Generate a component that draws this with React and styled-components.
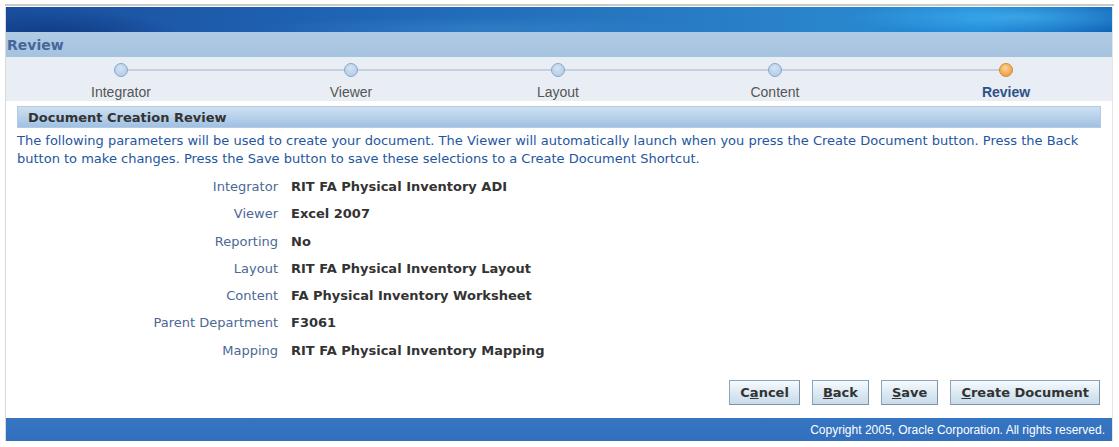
import React from 'react'
import styled, { createGlobalStyle } from 'styled-components'

const Global = createGlobalStyle`
  body {
    margin: 0;
    background: #fff;
    font-family: "DejaVu Sans", Tahoma, sans-serif;
  }
`

const Page = styled.div`
  padding: 4px 6px 6px 5px;
`

const TopRule = styled.div`
  height: 2px;
  background: #c9c9c9;
  margin-right: -1px;
  margin-bottom: 1px;
`

const Frame = styled.div`
  border-left: 1px solid #d9d9d9;
  border-right: 1px solid #e4e4e4;
`

const Banner = styled.div`
  height: 25px;
  background:
    radial-gradient(ellipse 240px 26px at 1010px 10px, rgba(80, 190, 245, 0.6), transparent 70%),
    radial-gradient(ellipse 180px 40px at 50px 30px, rgba(10, 45, 115, 0.65), transparent 70%),
    radial-gradient(ellipse 320px 18px at 470px 22px, rgba(70, 150, 215, 0.35), transparent 70%),
    linear-gradient(90deg, #1a4f9e 0%, #1f62b2 28%, #2676c0 55%, #2a86cc 75%, #1d88d8 88%, #0f62b6 100%);
`

const TitleBar = styled.div`
  height: 25px;
  display: flex;
  align-items: center;
  padding-left: 1px;
  background: linear-gradient(#b0cbe4, #a5c2df);
  color: #46669a;
  font-weight: bold;
  font-size: 14px;
`

const Train = styled.div`
  height: 44px;
  background: #e9eef5;
  display: grid;
  grid-template-columns: 230px 230px 184px 250px 1fr;
`

const Step = styled.div`
  position: relative;
  display: flex;
  flex-direction: column;
  align-items: center;
  padding-top: 6px;
  &::before, &::after {
    content: '';
    position: absolute;
    top: 12px;
    height: 2px;
    background: #c2d2e3;
    width: 50%;
  }
  &::before {
    left: 0;
    display: ${p => (p.$first ? 'none' : 'block')};
  }
  &::after {
    right: 0;
    display: ${p => (p.$last ? 'none' : 'block')};
  }
`

const Node = styled.span`
  position: relative;
  z-index: 1;
  width: 12px;
  height: 12px;
  border-radius: 50%;
  border: 1px solid ${p => (p.$active ? '#d0893a' : '#86a7c8')};
  background: ${p =>
    p.$active
      ? 'radial-gradient(circle at 45% 35%, #fbd39a, #f0a246 70%)'
      : 'radial-gradient(circle at 45% 35%, #d3e3f3, #b7cfe8 70%)'};
`

const StepLabel = styled.span`
  margin-top: 7px;
  font-family: "Liberation Sans", Arial, sans-serif;
  font-size: 14px;
  color: ${p => (p.$active ? '#2d5188' : '#555')};
  font-weight: ${p => (p.$active ? 'bold' : 'normal')};
`

const Content = styled.div`
  padding: 5px 11px 0 11px;
`

const SectionHeader = styled.div`
  height: 20px;
  display: flex;
  align-items: center;
  padding-left: 10px;
  border: 1px solid #b4cbe2;
  background: linear-gradient(#cfe0f1, #9fc1e3);
  color: #333;
  font-weight: bold;
  font-size: 13px;
`

const Intro = styled.p`
  margin: 4px 0 0 0;
  color: #2456a0;
  font-size: 13px;
  line-height: 18px;
`

const Fields = styled.div`
  display: grid;
  grid-template-columns: 261px 1fr;
  column-gap: 13px;
  margin-top: 5px;
  line-height: 27.3px;
`

const FieldLabel = styled.div`
  text-align: right;
  color: #4c6894;
  font-size: 13px;
`

const FieldValue = styled.div`
  color: #333;
  font-weight: bold;
  font-size: 13px;
`

const Buttons = styled.div`
  display: flex;
  justify-content: flex-end;
  gap: 12px;
  margin-top: 16px;
  padding-right: 1px;
`

const Button = styled.button`
  height: 25px;
  padding: 0 10px;
  border: 1px solid #8ea5bf;
  border-right-color: #7d93ad;
  border-bottom-color: #7d93ad;
  background: linear-gradient(#f7fbfd, #d9e8f2 55%, #c9dcea);
  color: #333;
  font-family: "DejaVu Sans", Tahoma, sans-serif;
  font-weight: bold;
  font-size: 13px;
  cursor: pointer;
  u {
    text-decoration: underline;
  }
`

const Footer = styled.div`
  margin-top: 13px;
  height: 23px;
  background: linear-gradient(#3675c1, #3270bd);
  color: #fff;
  display: flex;
  align-items: center;
  justify-content: flex-end;
  padding-right: 7px;
  font-family: "Liberation Sans", Arial, sans-serif;
  font-size: 12px;
`

const steps = ['Integrator', 'Viewer', 'Layout', 'Content', 'Review']

const fields = [
  ['Integrator', 'RIT FA Physical Inventory ADI'],
  ['Viewer', 'Excel 2007'],
  ['Reporting', 'No'],
  ['Layout', 'RIT FA Physical Inventory Layout'],
  ['Content', 'FA Physical Inventory Worksheet'],
  ['Parent Department', 'F3061'],
  ['Mapping', 'RIT FA Physical Inventory Mapping'],
]

const App = () => {
  return (
    <Page>
      <Global />
      <TopRule />
      <Frame>
        <Banner />
        <TitleBar>Review</TitleBar>
        <Train>
          {steps.map((s, i) => (
            <Step key={s} $first={i === 0} $last={i === steps.length - 1}>
              <Node $active={i === steps.length - 1} />
              <StepLabel $active={i === steps.length - 1}>{s}</StepLabel>
            </Step>
          ))}
        </Train>
        <Content>
          <SectionHeader>Document Creation Review</SectionHeader>
          <Intro>
            The following parameters will be used to create your document. The Viewer will automatically launch when you press the Create Document button. Press the Back button to make changes. Press the Save button to save these selections to a Create Document Shortcut.
          </Intro>
          <Fields>
            {fields.map(([l, v]) => (
              <React.Fragment key={l}>
                <FieldLabel>{l}</FieldLabel>
                <FieldValue>{v}</FieldValue>
              </React.Fragment>
            ))}
          </Fields>
          <Buttons>
            <Button>C<u>a</u>ncel</Button>
            <Button><u>B</u>ack</Button>
            <Button><u>S</u>ave</Button>
            <Button><u>C</u>reate Document</Button>
          </Buttons>
        </Content>
        <Footer>Copyright 2005, Oracle Corporation. All rights reserved.</Footer>
      </Frame>
    </Page>
  )
}

export default App
